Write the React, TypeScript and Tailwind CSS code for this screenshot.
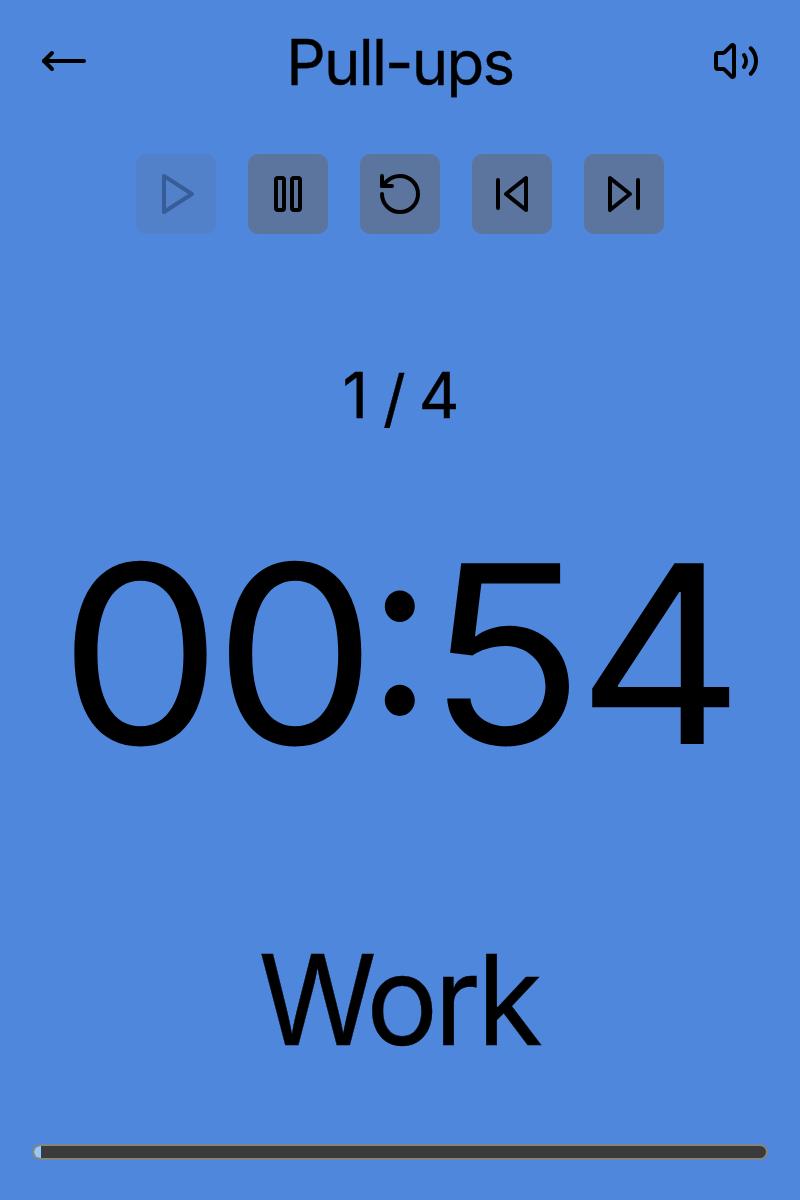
import type { ReactNode } from "react";
import { MoveLeft, RotateCcw, Volume2 } from "lucide-react";

function Glyph({ children }: { children: ReactNode }) {
  return (
    <svg
      className="h-12 w-12"
      viewBox="0 0 24 24"
      fill="none"
      stroke="currentColor"
      strokeWidth="2"
      strokeLinecap="round"
      strokeLinejoin="round"
    >
      {children}
    </svg>
  );
}

function ControlButton({ label, disabled, children }: { label: string; disabled?: boolean; children: ReactNode }) {
  return (
    <button
      aria-label={label}
      disabled={disabled}
      className="flex h-20 w-20 items-center justify-center rounded-[10px] bg-[#5c759e] disabled:opacity-30"
    >
      {children}
    </button>
  );
}

export default function App() {
  const progress = 1;

  return (
    <div className="flex h-[1200px] w-[800px] flex-col overflow-hidden bg-[#4f87dc] font-['Inter',sans-serif] text-black">
      <header className="flex h-[122px] items-center justify-between px-10">
        <MoveLeft size={48} />
        <h1 className="mt-[2px] scale-x-98 text-[63px] leading-[76px] tracking-[-1.8px] [-webkit-text-stroke:0.4px_black]">Pull-ups</h1>
        <Volume2 size={48} />
      </header>

      <div className="mt-8 flex justify-center gap-8">
        <ControlButton label="Play" disabled>
          <Glyph>
            <polygon points="6 3 20 12 6 21 6 3" />
          </Glyph>
        </ControlButton>
        <ControlButton label="Pause">
          <Glyph>
            <rect x="6" y="4" width="4" height="16" rx="1" />
            <rect x="14" y="4" width="4" height="16" rx="1" />
          </Glyph>
        </ControlButton>
        <ControlButton label="Restart">
          <RotateCcw size={48} />
        </ControlButton>
        <ControlButton label="Previous">
          <Glyph>
            <polygon points="19 20 9 12 19 4 19 20" />
            <line x1="5" x2="5" y1="19" y2="5" />
          </Glyph>
        </ControlButton>
        <ControlButton label="Next">
          <Glyph>
            <polygon points="5 4 15 12 5 20 5 4" />
            <line x1="19" x2="19" y1="5" y2="19" />
          </Glyph>
        </ControlButton>
      </div>

      <div className="mt-28 text-center text-[63px] leading-[98px] tracking-[-1.9px] [-webkit-text-stroke:0.4px_black]">
        1 <span className="inline-block translate-x-[1px] translate-y-[3px]">/</span> 4
      </div>

      <div className="mt-[60px] ml-[3px] flex scale-x-104 justify-center text-[248.5px] leading-[299px] whitespace-nowrap">
        <span className="translate-x-[1px] tracking-[-8px]">0</span>
        <span className="translate-x-[1px] tracking-[-10px]">0</span>
        <span className="-translate-x-[1px] -translate-y-[26px] scale-x-92 text-[238px] tracking-[-9px]">:</span>
        <span className="tracking-[-6px]">5</span>
        <span className="-translate-x-[1px]">4</span>
      </div>

      <div className="mt-[119px] mr-[3px] scale-x-96 text-center text-[125px] leading-[155px] tracking-[-4.4px] [-webkit-text-stroke:0.4px_black]">Work</div>

      <div className="mx-8 mt-[67px] h-4 overflow-hidden rounded-full border-2 border-[#848484] bg-[#3b3b3b]">
        <div className="h-full bg-[#99c8ff]" style={{ width: `${progress}%` }} />
      </div>
    </div>
  );
}
